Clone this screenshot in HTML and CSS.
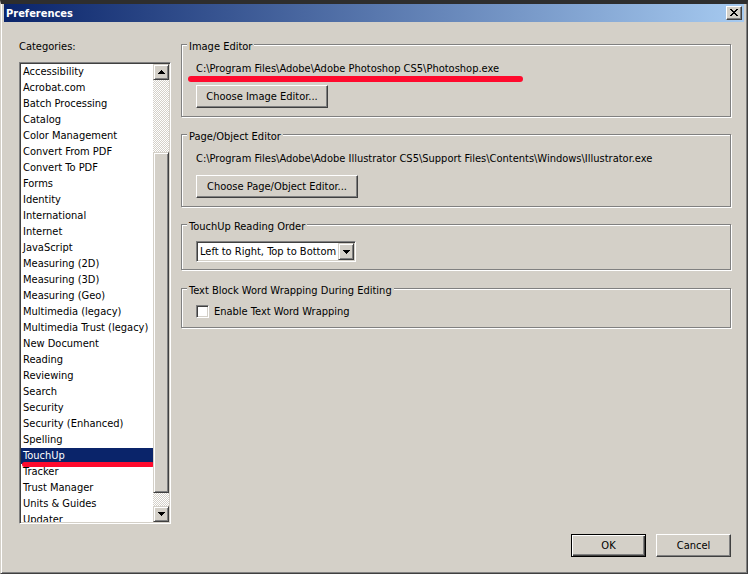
FILE: index.html
```html
<!DOCTYPE html>
<html>
<head>
<meta charset="utf-8">
<title>Preferences</title>
<link rel="stylesheet" href="styles.css">
</head>
<body>
<div class="window">
  <div class="titlebar">
    <span class="title">Preferences</span>
    <span class="close">
      <svg width="8" height="7" viewBox="0 0 8 7"><path d="M0 0h2v1h1v1h2V1h1V0h2v1H7v1H6v1H5v1h1v1h1v1h1v1H6V6H5V5H3v1H2v1H0V6h1V5h1V4h1V3H2V2H1V1H0z" fill="#000"/></svg>
    </span>
  </div>
  <div class="body">
    <div class="main">
      <div class="left">
        <div class="label">Categories:</div>
        <div class="listbox">
          <div class="items">
            <div class="item">Accessibility</div>
            <div class="item">Acrobat.com</div>
            <div class="item">Batch Processing</div>
            <div class="item">Catalog</div>
            <div class="item">Color Management</div>
            <div class="item">Convert From PDF</div>
            <div class="item">Convert To PDF</div>
            <div class="item">Forms</div>
            <div class="item">Identity</div>
            <div class="item">International</div>
            <div class="item">Internet</div>
            <div class="item">JavaScript</div>
            <div class="item">Measuring (2D)</div>
            <div class="item">Measuring (3D)</div>
            <div class="item">Measuring (Geo)</div>
            <div class="item">Multimedia (legacy)</div>
            <div class="item">Multimedia Trust (legacy)</div>
            <div class="item">New Document</div>
            <div class="item">Reading</div>
            <div class="item">Reviewing</div>
            <div class="item">Search</div>
            <div class="item">Security</div>
            <div class="item">Security (Enhanced)</div>
            <div class="item">Spelling</div>
            <div class="item sel">TouchUp</div>
            <div class="item">Tracker</div>
            <div class="item">Trust Manager</div>
            <div class="item">Units &amp; Guides</div>
            <div class="item">Updater</div>
          </div>
          <div class="scrollbar">
            <div class="sbtn">
              <svg width="7" height="4" viewBox="0 0 7 4"><path d="M3 0h1v1h1v1h1v1h1v1H0V3h1V2h1V1h1z" fill="#000"/></svg>
            </div>
            <div class="track"><div class="thumb"></div></div>
            <div class="sbtn">
              <svg width="7" height="4" viewBox="0 0 7 4"><path d="M0 0h7v1H6v1H5v1H4v1H3V3H2V2H1V1H0z" fill="#000"/></svg>
            </div>
          </div>
        </div>
      </div>
      <div class="right">
        <div class="group g-editor">
          <span class="legend">Image Editor</span>
          <div class="path marked">C:\Program Files\Adobe\Adobe Photoshop CS5\Photoshop.exe</div>
          <button class="btn btn-image">Choose Image Editor...</button>
        </div>
        <div class="group g-editor">
          <span class="legend">Page/Object Editor</span>
          <div class="path">C:\Program Files\Adobe\Adobe Illustrator CS5\Support Files\Contents\Windows\Illustrator.exe</div>
          <button class="btn btn-page">Choose Page/Object Editor...</button>
        </div>
        <div class="group g-order">
          <span class="legend">TouchUp Reading Order</span>
          <div class="combo">
            <span class="combo-text">Left to Right, Top to Bottom</span>
            <span class="combo-btn">
              <svg width="7" height="4" viewBox="0 0 7 4"><path d="M0 0h7v1H6v1H5v1H4v1H3V3H2V2H1V1H0z" fill="#000"/></svg>
            </span>
          </div>
        </div>
        <div class="group g-wrap">
          <span class="legend">Text Block Word Wrapping During Editing</span>
          <label class="check-row"><span class="check"></span><span>Enable Text Word Wrapping</span></label>
        </div>
      </div>
    </div>
    <div class="footer">
      <button class="btn btn-dialog btn-default">OK</button>
      <button class="btn btn-dialog">Cancel</button>
    </div>
  </div>
</div>
</body>
</html>
```
FILE: styles.css
```css
html, body {
  margin: 0;
  padding: 0;
  background: #D4D0C8;
}
body {
  font: 11px "DejaVu Sans Condensed", "DejaVu Sans", sans-serif;
  color: #000;
}
.window {
  box-sizing: border-box;
  width: 748px;
  height: 574px;
  background: #D4D0C8;
  border: 1px solid;
  border-color: #2e2e2e #404040 #404040 #D4D0C8;
  border-top-width: 4px;
  box-shadow: inset 1px 0 #fff, inset -1px -1px #808080;
  padding: 0 3px 3px 3px;
  display: flex;
  flex-direction: column;
}
.titlebar {
  height: 18px;
  flex: none;
  background: linear-gradient(to right, #0A246A, #A6CAF0);
  display: flex;
  align-items: center;
  justify-content: space-between;
  padding: 0 2px 0 2px;
}
.title {
  color: #fff;
  font-weight: bold;
  line-height: 13px;
}
.close {
  box-sizing: border-box;
  width: 16px;
  height: 14px;
  background: #D4D0C8;
  border: 1px solid;
  border-color: #fff #404040 #404040 #fff;
  box-shadow: inset -1px -1px #808080;
  display: flex;
  align-items: center;
  justify-content: center;
  padding-bottom: 1px;
}
.close svg { display: block; margin-left: -1px; }
.body {
  flex: 1;
  display: flex;
  flex-direction: column;
  gap: 10px;
  padding: 18px 13px 13px 15px;
  min-height: 0;
}
.main {
  flex: 1;
  display: flex;
  gap: 10px;
  min-height: 0;
}
.left {
  width: 152px;
  flex: none;
  display: flex;
  flex-direction: column;
}
.label {
  line-height: 13px;
  margin-bottom: 9px;
}
.listbox {
  flex: 1;
  min-height: 0;
  display: flex;
  background: #fff;
  border: 1px solid;
  border-color: #808080 #fff #fff #808080;
  box-shadow: inset 1px 1px #404040, inset -1px -1px #D4D0C8;
  padding: 1px;
}
.items {
  flex: 1;
  overflow: hidden;
}
.item {
  height: 16px;
  line-height: 16px;
  padding-left: 2px;
  white-space: nowrap;
}
.item.sel {
  background: #0A246A;
  color: #fff;
  position: relative;
}
.item.sel::after {
  content: "";
  position: absolute;
  left: 1px;
  right: -1px;
  top: 14px;
  height: 5px;
  border-radius: 3px;
  background: #FF0A2D;
}
.scrollbar {
  width: 16px;
  flex: none;
  display: flex;
  flex-direction: column;
}
.sbtn, .thumb, .combo-btn {
  box-sizing: border-box;
  background: #D4D0C8;
  border: 1px solid;
  border-color: #D4D0C8 #404040 #404040 #D4D0C8;
  box-shadow: inset 1px 1px #fff, inset -1px -1px #808080;
}
.sbtn {
  height: 16px;
  flex: none;
  display: flex;
  align-items: center;
  justify-content: center;
}
.sbtn svg, .combo-btn svg { display: block; }
.track {
  flex: 1;
  background: repeating-conic-gradient(#fff 0 25%, #D4D0C8 0 50%) 0 0 / 2px 2px;
}
.thumb {
  margin-top: 72px;
  height: 341px;
}
.right {
  flex: 1;
  display: flex;
  flex-direction: column;
  gap: 17px;
  padding-top: 4px;
}
.group {
  position: relative;
  flex: none;
  border: 1px solid #808080;
  box-shadow: inset 1px 1px #fff, 1px 1px #fff;
  padding-left: 14px;
}
.legend {
  position: absolute;
  top: -5px;
  left: 5px;
  padding: 0 2px;
  line-height: 13px;
  background: #D4D0C8;
  white-space: nowrap;
}
.g-editor {
  padding-top: 17px;
  padding-bottom: 8px;
}
.g-order {
  padding-top: 16px;
  padding-bottom: 7px;
}
.g-wrap {
  margin-top: 1px;
  padding-top: 16px;
  padding-bottom: 9px;
}
.path {
  position: relative;
  line-height: 13px;
  white-space: nowrap;
  margin-bottom: 10px;
}
.path.marked::after {
  content: "";
  position: absolute;
  left: -8px;
  width: 335px;
  top: 14px;
  height: 6px;
  border-radius: 3px;
  background: #FF0A2D;
}
.btn {
  display: block;
  box-sizing: border-box;
  height: 23px;
  padding: 0;
  margin: 0;
  font: inherit;
  color: #000;
  text-align: center;
  background: #D4D0C8;
  border: 1px solid;
  border-color: #fff #404040 #404040 #fff;
  box-shadow: inset -1px -1px #808080;
}
.btn-image { width: 132px; }
.btn-page { width: 162px; }
.btn-dialog { width: 75px; }
.btn-default {
  border-color: #000;
  box-shadow: inset 1px 1px #fff, inset -1px -1px #404040, inset -2px -2px #808080;
}
.combo {
  box-sizing: border-box;
  width: 160px;
  height: 21px;
  display: flex;
  background: #fff;
  border: 1px solid;
  border-color: #808080 #fff #fff #808080;
  box-shadow: inset 1px 1px #404040, inset -1px -1px #D4D0C8;
  padding: 1px;
}
.combo-text {
  flex: 1;
  line-height: 17px;
  padding-left: 2px;
  white-space: nowrap;
  overflow: hidden;
}
.combo-btn {
  width: 16px;
  height: 17px;
  flex: none;
  display: flex;
  align-items: center;
  justify-content: center;
}
.check-row {
  display: flex;
  align-items: center;
  gap: 5px;
  height: 13px;
  line-height: 13px;
}
.check {
  box-sizing: border-box;
  width: 13px;
  height: 13px;
  flex: none;
  background: #fff;
  border: 1px solid;
  border-color: #808080 #fff #fff #808080;
  box-shadow: inset 1px 1px #404040, inset -1px -1px #D4D0C8;
}
.footer {
  height: 23px;
  flex: none;
  display: flex;
  justify-content: flex-end;
  gap: 10px;
}
```
